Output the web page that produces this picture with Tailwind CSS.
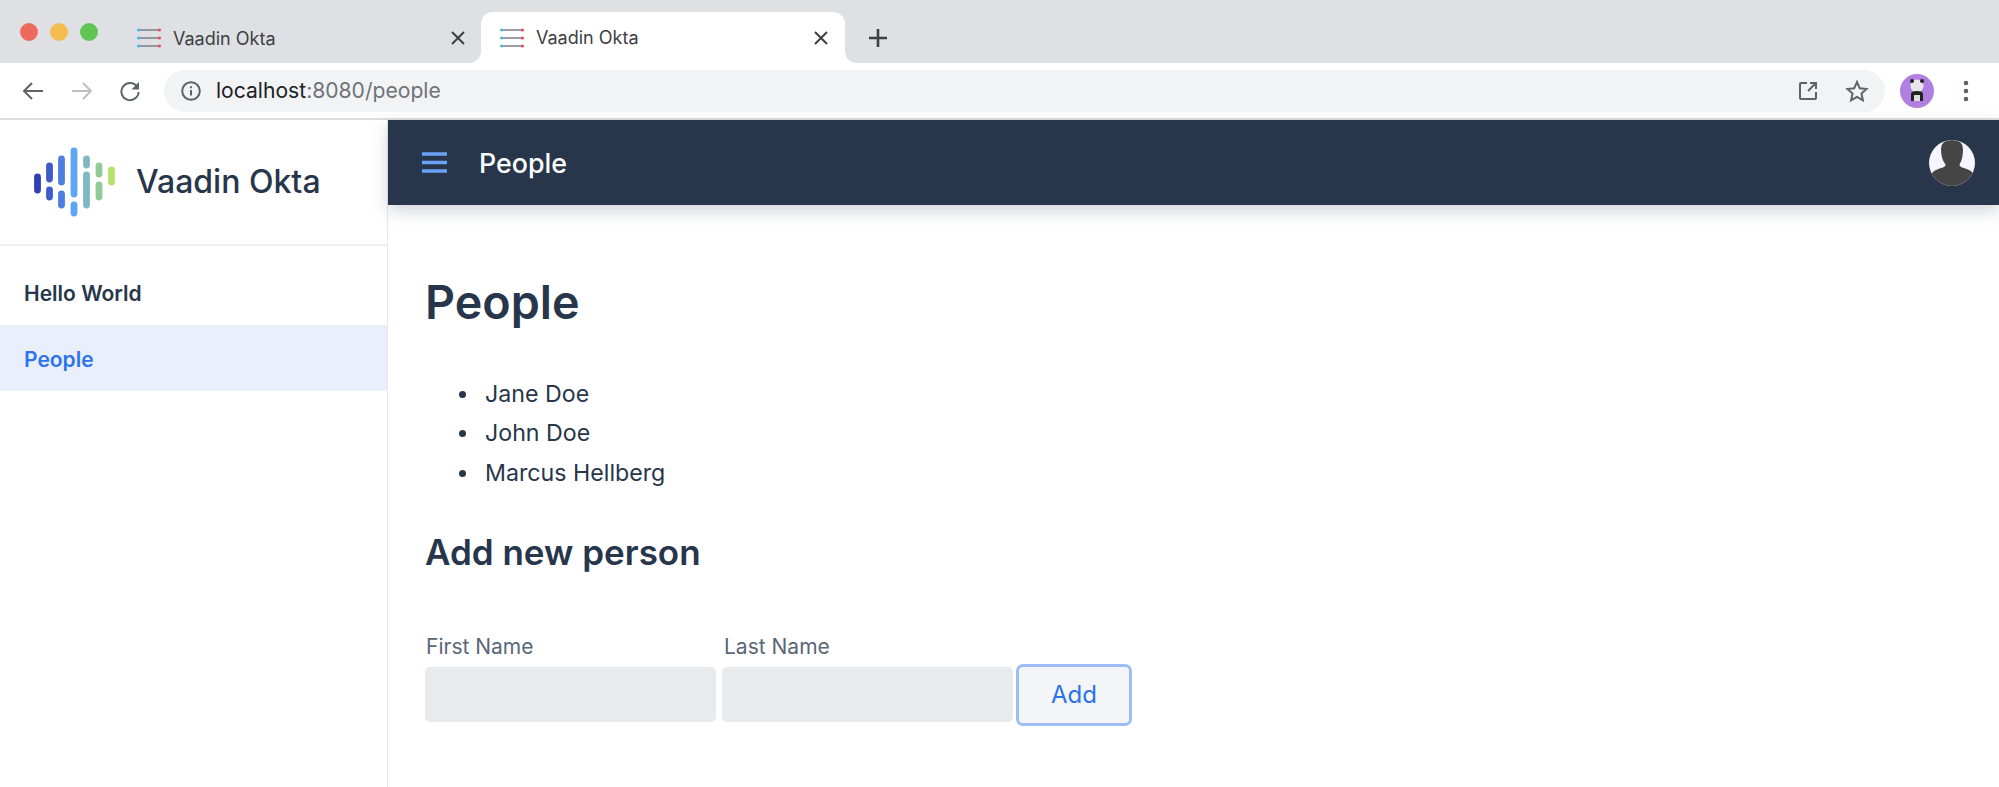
<!DOCTYPE html>
<html lang="en">
<head>
  <meta charset="UTF-8">
  <title>Vaadin Okta</title>
  <script src="https://cdn.jsdelivr.net/npm/@tailwindcss/browser@4"></script>
</head>
<body class="w-[1999px] h-[787px] overflow-hidden bg-white font-['Inter',sans-serif] text-[#27364a]">
  <!-- Browser chrome: tab strip -->
  <div class="h-[63px] bg-white flex items-stretch">
    <div class="w-[481px] shrink-0 bg-[#dfe0e4] rounded-br-[12px] flex items-start">
      <div class="flex gap-3 pl-5 pt-[23px] w-[117px] shrink-0">
        <span class="size-[18px] rounded-full bg-[#ee6a5f]"></span>
        <span class="size-[18px] rounded-full bg-[#f5bd4f]"></span>
        <span class="size-[18px] rounded-full bg-[#61c454]"></span>
      </div>
      <div class="w-[364px] h-[63px] flex items-center pl-5 pr-[15px] pt-[25px] pb-[12px] text-[18px] text-[#3c4043] shrink-0">
        <svg class="w-6 h-5 mr-3 shrink-0" viewBox="0 0 24 20"><g fill="none" stroke="#7a7f88" stroke-width="1.5"><path d="M1 2h22M1 10h22M1 18h22"/></g><g fill="#4db4f3"><circle cx="1.5" cy="2" r="1.5"/><circle cx="1.5" cy="10" r="1.5"/><circle cx="1.5" cy="18" r="1.5"/></g><g fill="#f0444f"><circle cx="22.5" cy="2" r="1.5"/><circle cx="22.5" cy="10" r="1.5"/><circle cx="22.5" cy="18" r="1.5"/></g></svg>
        <span class="grow">Vaadin Okta</span>
        <svg class="size-4" viewBox="0 0 16 16"><path d="M2 2l12 12M14 2L2 14" stroke="#3c4043" stroke-width="2" fill="none"/></svg>
      </div>
    </div>
    <div class="w-[364px] shrink-0 bg-[#dfe0e4] pt-3">
      <div class="h-[51px] pl-[19px] pr-[16px] flex items-center bg-white rounded-t-[12px] text-[18px] text-[#3c4043]">
        <svg class="w-6 h-5 mr-3 shrink-0" viewBox="0 0 24 20"><g fill="none" stroke="#7a7f88" stroke-width="1.5"><path d="M1 2h22M1 10h22M1 18h22"/></g><g fill="#4db4f3"><circle cx="1.5" cy="2" r="1.5"/><circle cx="1.5" cy="10" r="1.5"/><circle cx="1.5" cy="18" r="1.5"/></g><g fill="#f0444f"><circle cx="22.5" cy="2" r="1.5"/><circle cx="22.5" cy="10" r="1.5"/><circle cx="22.5" cy="18" r="1.5"/></g></svg>
        <span class="grow">Vaadin Okta</span>
        <svg class="size-4" viewBox="0 0 16 16"><path d="M2 2l12 12M14 2L2 14" stroke="#3c4043" stroke-width="2" fill="none"/></svg>
      </div>
    </div>
    <div class="grow bg-[#dfe0e4] rounded-bl-[12px] pl-[23px] pt-[28px]">
      <svg class="size-[20px]" viewBox="0 0 20 20"><path d="M10 1v18M1 10h18" stroke="#3c4043" stroke-width="2.6" fill="none"/></svg>
    </div>
  </div>

  <!-- Browser chrome: toolbar -->
  <div class="h-[55px] bg-white flex items-center pl-[22px]">
    <svg class="size-[22px] shrink-0" viewBox="0 0 22 22"><path d="M21 11H2M10 3l-8 8 8 8" stroke="#5f6368" stroke-width="2" fill="none"/></svg>
    <svg class="size-[22px] ml-[27px] shrink-0" viewBox="0 0 22 22"><path d="M1 11h19M12 3l8 8-8 8" stroke="#bcbec2" stroke-width="2" fill="none"/></svg>
    <svg class="size-[22px] ml-[26px] shrink-0" viewBox="0 0 22 22"><path d="M18 6.5A8.6 8.6 0 1 0 19.6 12" stroke="#5f6368" stroke-width="2" fill="none"/><path d="M20 2v7.500h-7.500z" fill="#5f6368"/></svg>
    <div class="ml-[23px] w-[1721px] h-[42px] rounded-full bg-[#f1f3f4] flex items-center pl-[17px] pr-[16px] shrink-0">
      <svg class="size-[20px] shrink-0" viewBox="0 0 20 20"><circle cx="10" cy="10" r="8.800" stroke="#5f6368" stroke-width="2" fill="none"/><path d="M10 9v5.500M10 5.200v2" stroke="#5f6368" stroke-width="2" fill="none"/></svg>
      <span class="ml-[15px] text-[21.100px] text-[#202124] grow">localhost<span class="text-[#6f7378]">:8080/people</span></span>
      <svg class="size-[20px] shrink-0" viewBox="0 0 20 20"><path d="M9 2H3a1 1 0 0 0-1 1v14a1 1 0 0 0 1 1h14a1 1 0 0 0 1-1v-6M10 10l8-8M12 2h6v6" stroke="#5f6368" stroke-width="2" fill="none"/></svg>
      <svg class="size-[24px] ml-[27px] shrink-0" viewBox="0 0 24 24"><path d="M12 3l2.800 6.300 6.700.7-5 4.600 1.400 6.700-5.900-3.400-5.900 3.400 1.400-6.700-5-4.600 6.700-.7z" stroke="#5f6368" stroke-width="2" fill="none"/></svg>
    </div>
    <svg class="size-[34px] ml-[15px] shrink-0" viewBox="0 0 34 34"><circle cx="17" cy="17" r="17" fill="#b07fe0"/><circle cx="17" cy="12" r="6.500" fill="#e8e6ea"/><circle cx="12" cy="7" r="2" fill="#222"/><circle cx="22" cy="7" r="2" fill="#222"/><path d="M11 27V20q0-3 6-3t6 3v7h-3v-6h-6v6z" fill="#222"/><path d="M14 21h6v6h-6z" fill="#ddd"/></svg>
    <svg class="w-[8px] h-[22px] ml-[28px] shrink-0" viewBox="0 0 8 22"><circle cx="4" cy="3" r="2.300" fill="#5f6368"/><circle cx="4" cy="11" r="2.300" fill="#5f6368"/><circle cx="4" cy="19" r="2.300" fill="#5f6368"/></svg>
  </div>
  <div class="h-[2px] bg-[#dcdde0]"></div>

  <!-- App -->
  <div class="flex h-[667px]">
    <aside class="w-[388px] shrink-0 border-r border-[#e6e8eb]">
      <div class="h-[126px] border-b-2 border-[#eef0f2] flex items-center pl-[33px]">
        <svg class="w-[83px] h-[70px] shrink-0" viewBox="33.500 147 83 70">
          <g fill="none" stroke-width="6.800" stroke-linecap="round">
            <path stroke="#2f3fb5" d="M38 177v13"/>
            <path stroke="#3f5acb" d="M50 166v13M50 190v7"/>
            <path stroke="#4c7fe0" d="M62 159v23M62 194v11"/>
            <path stroke="#5fa5f5" d="M74.500 151v43M74.500 205v8"/>
            <path stroke="#7fb8c4" d="M87 159v6M87 175v30"/>
            <path stroke="#92cb96" d="M99.500 166v8M99.500 185v12"/>
            <path stroke="#b5e26c" d="M112 170v12"/>
          </g>
        </svg>
        <span class="ml-[20px] text-[32px] font-medium">Vaadin Okta</span>
      </div>
      <nav class="pt-[13px] text-[21px] font-semibold">
        <a class="h-[66px] flex items-center pl-[24px] pt-[4px]">Hello World</a>
        <a class="h-[66px] flex items-center pl-[24px] pt-[4px] bg-[#e9f0fc] text-[#2f74ee]">People</a>
      </nav>
    </aside>

    <div class="grow min-w-0">
      <header class="h-[85px] bg-[#27364a] flex items-center pl-[34px] pr-[24px] shadow-[0_6px_16px_rgba(30,40,60,0.2)]">
        <svg class="w-[25px] h-[21px] shrink-0" viewBox="0 0 25 21"><path d="M0 2h25M0 10.500h25M0 19h25" stroke="#6aa2f5" stroke-width="3.400" fill="none"/></svg>
        <span class="ml-[32px] pt-[1px] text-[26.800px] font-medium text-white grow">People</span>
        <svg class="size-[46px] shrink-0" viewBox="0 0 46 46"><clipPath id="av"><circle cx="23" cy="23" r="23"/></clipPath><g clip-path="url(#av)"><rect width="46" height="46" fill="#f3f7fd"/><path d="M12 9q0-9 11-9t11 9q0 10-3.500 15.500 0 2.500 4.500 3.500 7 2 10 6v12H2V34q3-4 10-6 4.500-1 4.500-3.500Q12 19 12 9z" fill="#454545"/></g></svg>
      </header>
      <main class="pl-[37px] pt-[65px]">
        <h1 class="text-[46.600px] leading-[64px] font-semibold">People</h1>
        <ul class="mt-[41px] pl-[34px] text-[23.200px] leading-[39.300px]">
          <li class="flex items-center gap-[19px]"><span class="size-[7px] rounded-full bg-[#27364a]"></span>Jane Doe</li>
          <li class="flex items-center gap-[19px]"><span class="size-[7px] rounded-full bg-[#27364a]"></span>John Doe</li>
          <li class="flex items-center gap-[19px]"><span class="size-[7px] rounded-full bg-[#27364a]"></span>Marcus Hellberg</li>
        </ul>
        <h2 class="mt-[35px] text-[35px] leading-[48px] font-semibold">Add new person</h2>
        <form class="mt-[56px] flex items-end">
          <label class="w-[291px] text-[21px] leading-[30px] text-[#5b6678]">
            <span class="block pl-[1px] pb-[5px]">First Name</span>
            <input class="block w-full h-[55px] mb-[4px] rounded-[5px] bg-[#e8ebee]">
          </label>
          <label class="w-[291px] ml-[6px] text-[21px] leading-[30px] text-[#5b6678]">
            <span class="block pl-[2px] pb-[5px]">Last Name</span>
            <input class="block w-full h-[55px] mb-[4px] rounded-[5px] bg-[#e8ebee]">
          </label>
          <button type="button" class="w-[116px] h-[62px] ml-[3px] rounded-[7px] border-[3px] border-[#9cbdf5] bg-[#f3f5f8] text-[24px] text-[#2a72ea]">Add</button>
        </form>
      </main>
    </div>
  </div>
</body>
</html>
